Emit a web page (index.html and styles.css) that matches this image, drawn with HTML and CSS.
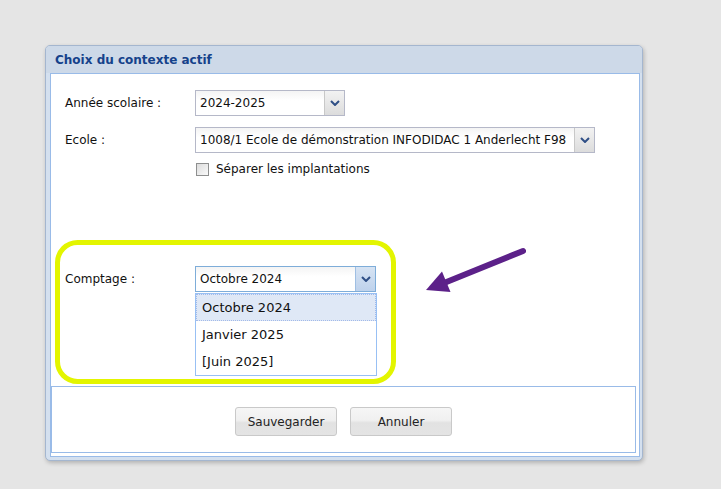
FILE: index.html
```html
<!DOCTYPE html>
<html lang="fr">
<head>
<meta charset="utf-8">
<title>Choix du contexte actif</title>
<link rel="stylesheet" href="styles.css">
</head>
<body>
<div class="window">
  <div class="header"><span class="title">Choix du contexte actif</span></div>
  <div class="body">
    <div class="form">
      <div class="row">
        <label class="label">Année scolaire :</label>
        <div class="select w150">
          <span class="value">2024-2025</span>
          <span class="trigger"><svg width="10" height="6" viewBox="0 0 10 6"><polyline points="1,1 5,5 9,1" fill="none" stroke="#2f4f86" stroke-width="2"/></svg></span>
        </div>
      </div>
      <div class="row r2">
        <label class="label">Ecole :</label>
        <div class="select w400">
          <span class="value">1008/1 Ecole de démonstration INFODIDAC 1 Anderlecht F98</span>
          <span class="trigger"><svg width="10" height="6" viewBox="0 0 10 6"><polyline points="1,1 5,5 9,1" fill="none" stroke="#2f4f86" stroke-width="2"/></svg></span>
        </div>
      </div>
      <div class="checkrow">
        <span class="checkbox"></span>
        <span class="checktext">Séparer les implantations</span>
      </div>
      <div class="row r4">
        <label class="label">Comptage :</label>
        <div class="combo">
          <div class="select w180 focus">
            <span class="value">Octobre 2024</span>
            <span class="trigger"><svg width="10" height="6" viewBox="0 0 10 6"><polyline points="1,1 5,5 9,1" fill="none" stroke="#2f4f86" stroke-width="2"/></svg></span>
          </div>
          <ul class="list">
            <li class="item selected">Octobre 2024</li>
            <li class="item">Janvier 2025</li>
            <li class="item">[Juin 2025]</li>
          </ul>
        </div>
      </div>
    </div>
    <div class="footer">
      <button class="btn">Sauvegarder</button>
      <button class="btn">Annuler</button>
    </div>
  </div>
</div>
<svg class="annot" width="721" height="489" viewBox="0 0 721 489">
  <rect x="57.5" y="242.5" width="336" height="139" rx="20" ry="20" fill="none" stroke="#e3f500" stroke-width="5"/>
  <line x1="523" y1="251" x2="444" y2="283" stroke="#5c2189" stroke-width="6" stroke-linecap="round"/>
  <polygon points="426,290 442,271.5 450.5,292" fill="#5c2189"/>
</svg>
</body>
</html>
```

FILE: styles.css
```css
html, body {
  margin: 0;
  padding: 0;
}
body {
  background: #e5e5e5;
  width: 721px;
  height: 489px;
  position: relative;
  overflow: hidden;
  font-family: "DejaVu Sans", sans-serif;
  font-size: 12px;
  color: #111;
}
.window {
  box-sizing: border-box;
  margin: 45px 0 0 45px;
  width: 598px;
  height: 416px;
  border: 1px solid #a4b6cf;
  border-radius: 5px;
  background: #d4e0ef;
  padding: 0 2px 3px 4px;
  box-shadow: 1px 2px 4px rgba(0, 0, 0, 0.22);
}
.header {
  height: 27px;
  margin: 0 -2px 0 -4px;
  padding-left: 9px;
  background: #cdd9e8;
  border-radius: 4px 4px 0 0;
  display: flex;
  align-items: center;
}
.title {
  font-weight: bold;
  font-size: 12px;
  color: #15428b;
}
.body {
  box-sizing: border-box;
  height: 384px;
  border: 1px solid #99bbe8;
  background: #fff;
  display: flex;
  flex-direction: column;
}
.form {
  height: 312px;
  padding: 16px 0 0 14px;
  box-sizing: border-box;
}
.row {
  display: flex;
  align-items: center;
  height: 26px;
}
.r2 {
  margin-top: 11px;
}
.r4 {
  margin-top: 90px;
}
.label {
  width: 130px;
  flex: none;
}
.select {
  box-sizing: border-box;
  height: 26px;
  border: 1px solid #b5b8c8;
  background: linear-gradient(#f4f4f4, #fff 40%);
  display: flex;
  align-items: center;
  overflow: hidden;
}
.w150 { width: 150px; }
.w400 { width: 400px; }
.w180 { width: 181px; }
.value {
  flex: 1;
  min-width: 0;
  padding-left: 4px;
  white-space: nowrap;
  overflow: hidden;
}
.trigger {
  flex: none;
  width: 19px;
  height: 100%;
  border-left: 1px solid #c8c8c8;
  background: linear-gradient(#f2f2f2, #dcdcdc);
  display: flex;
  align-items: center;
  justify-content: center;
}
.focus {
  border-color: #7eadd9;
}
.focus .trigger {
  background: linear-gradient(#d6e3f3, #bed2ec);
  border-left-color: #9fbfe3;
}
.checkrow {
  display: flex;
  align-items: center;
  margin: 10px 0 0 131px;
  height: 13px;
}
.checkbox {
  box-sizing: border-box;
  width: 13px;
  height: 13px;
  border: 1px solid #8e8f8f;
  background: linear-gradient(135deg, #dcdcdc, #fafafa);
}
.checktext {
  margin-left: 7px;
  position: relative;
  top: -1px;
}
.combo {
  position: relative;
}
.list {
  position: absolute;
  top: 27px;
  left: 0;
  width: 182px;
  box-sizing: border-box;
  margin: 0;
  padding: 0;
  list-style: none;
  background: #fff;
  border: 1px solid #98c0f4;
  font-size: 13px;
  color: #111;
}
.item {
  box-sizing: border-box;
  height: 27px;
  line-height: 25px;
  padding-left: 5px;
  border: 1px solid transparent;
}
.item.selected {
  background: #dfe8f6;
  border: 1px dotted #a3bae9;
}
.footer {
  box-sizing: border-box;
  flex: 1;
  margin: 0 3px 3px 0;
  border: 1px solid #99bbe8;
  display: flex;
  justify-content: center;
  align-items: flex-start;
  gap: 13px;
  padding-top: 20px;
}
.btn {
  box-sizing: border-box;
  width: 102px;
  height: 29px;
  border: 1px solid #c9c9c9;
  border-radius: 3px;
  background: linear-gradient(#f6f6f6, #f0f0f0 45%, #e2e2e2 55%, #e4e4e4);
  font-family: "DejaVu Sans", sans-serif;
  font-size: 12px;
  color: #222;
  padding: 0;
}
.annot {
  position: absolute;
  left: 0;
  top: 0;
  pointer-events: none;
}
```
